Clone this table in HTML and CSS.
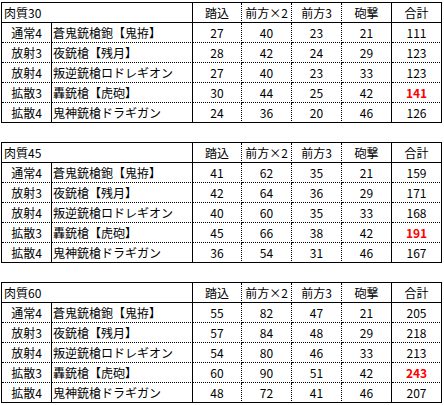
FILE: index.html
```html
<!DOCTYPE html>
<html lang="ja">
<head>
<meta charset="utf-8">
<title>肉質別ダメージ</title>
<link rel="stylesheet" href="styles.css">
</head>
<body>
<div class="page">
  <table class="dmg">
    <colgroup><col class="c0"><col class="c1"><col class="c2"><col class="c3"><col class="c4"><col class="c5"><col class="c6"></colgroup>
    <tr class="head"><th class="title" colspan="2">肉質30</th><th>踏込</th><th>前方×2</th><th>前方3</th><th class="solid">砲撃</th><th class="solid">合計</th></tr>
    <tr><td class="type">通常4</td><td class="name">蒼鬼銃槍鉋【鬼拵】</td><td>27</td><td>40</td><td>23</td><td class="solid">21</td><td class="solid">111</td></tr>
    <tr><td class="type">放射3</td><td class="name">夜銃槍【残月】</td><td>28</td><td>42</td><td>24</td><td class="solid">29</td><td class="solid">123</td></tr>
    <tr><td class="type">放射4</td><td class="name">叛逆銃槍ロドレギオン</td><td>27</td><td>40</td><td>23</td><td class="solid">33</td><td class="solid">123</td></tr>
    <tr><td class="type">拡散3</td><td class="name">轟銃槍【虎砲】</td><td>30</td><td>44</td><td>25</td><td class="solid">42</td><td class="solid max">141</td></tr>
    <tr class="last"><td class="type">拡散4</td><td class="name">鬼神銃槍ドラギガン</td><td>24</td><td>36</td><td>20</td><td class="solid">46</td><td class="solid">126</td></tr>
  </table>

  <table class="dmg">
    <colgroup><col class="c0"><col class="c1"><col class="c2"><col class="c3"><col class="c4"><col class="c5"><col class="c6"></colgroup>
    <tr class="head"><th class="title" colspan="2">肉質45</th><th>踏込</th><th>前方×2</th><th>前方3</th><th class="solid">砲撃</th><th class="solid">合計</th></tr>
    <tr><td class="type">通常4</td><td class="name">蒼鬼銃槍鉋【鬼拵】</td><td>41</td><td>62</td><td>35</td><td class="solid">21</td><td class="solid">159</td></tr>
    <tr><td class="type">放射3</td><td class="name">夜銃槍【残月】</td><td>42</td><td>64</td><td>36</td><td class="solid">29</td><td class="solid">171</td></tr>
    <tr><td class="type">放射4</td><td class="name">叛逆銃槍ロドレギオン</td><td>40</td><td>60</td><td>35</td><td class="solid">33</td><td class="solid">168</td></tr>
    <tr><td class="type">拡散3</td><td class="name">轟銃槍【虎砲】</td><td>45</td><td>66</td><td>38</td><td class="solid">42</td><td class="solid max">191</td></tr>
    <tr class="last"><td class="type">拡散4</td><td class="name">鬼神銃槍ドラギガン</td><td>36</td><td>54</td><td>31</td><td class="solid">46</td><td class="solid">167</td></tr>
  </table>

  <table class="dmg">
    <colgroup><col class="c0"><col class="c1"><col class="c2"><col class="c3"><col class="c4"><col class="c5"><col class="c6"></colgroup>
    <tr class="head"><th class="title" colspan="2">肉質60</th><th>踏込</th><th>前方×2</th><th>前方3</th><th class="solid">砲撃</th><th class="solid">合計</th></tr>
    <tr><td class="type">通常4</td><td class="name">蒼鬼銃槍鉋【鬼拵】</td><td>55</td><td>82</td><td>47</td><td class="solid">21</td><td class="solid">205</td></tr>
    <tr><td class="type">放射3</td><td class="name">夜銃槍【残月】</td><td>57</td><td>84</td><td>48</td><td class="solid">29</td><td class="solid">218</td></tr>
    <tr><td class="type">放射4</td><td class="name">叛逆銃槍ロドレギオン</td><td>54</td><td>80</td><td>46</td><td class="solid">33</td><td class="solid">213</td></tr>
    <tr><td class="type">拡散3</td><td class="name">轟銃槍【虎砲】</td><td>60</td><td>90</td><td>51</td><td class="solid">42</td><td class="solid max">243</td></tr>
    <tr class="last"><td class="type">拡散4</td><td class="name">鬼神銃槍ドラギガン</td><td>48</td><td>72</td><td>41</td><td class="solid">46</td><td class="solid">207</td></tr>
  </table>
</div>
</body>
</html>
```

FILE: styles.css
```css
html, body {
  margin: 0;
  padding: 0;
  background: #ffffff;
}

.page {
  padding: 2px 0 0 1px;
  display: flex;
  flex-direction: column;
  align-items: flex-start;
  gap: 19px;
}

.dmg {
  border-collapse: separate;
  border-spacing: 0;
  table-layout: fixed;
  width: 441px;
  border-top: 1px solid #000;
  border-left: 1px solid #000;
  font-family: "Noto Sans CJK JP", "Noto Sans", sans-serif;
  font-size: 12px;
  color: #000;
}

.c0 { width: 50px; }
.c1 { width: 141px; }
.c2 { width: 49px; }
.c3, .c4, .c5, .c6 { width: 50px; }

.dmg th,
.dmg td {
  box-sizing: border-box;
  height: 20px;
  padding: 0;
  line-height: 19px;
  font-weight: normal;
  text-align: center;
  vertical-align: middle;
  white-space: nowrap;
  overflow: hidden;
  border-right: 1px dotted #000;
  border-bottom: 1px dotted #000;
}

.dmg .head th {
  border-bottom: 1px solid #000;
}

.dmg .last td {
  border-bottom: 1px solid #000;
}

.dmg .title {
  text-align: left;
  padding-left: 2px;
  border-right: 1px solid #000;
}

.dmg .solid,
.dmg .type,
.dmg .name {
  border-right: 1px solid #000;
}

.dmg .name {
  text-align: left;
  padding-left: 1px;
}

.dmg .max {
  color: #ff0000;
  font-weight: bold;
}
```
